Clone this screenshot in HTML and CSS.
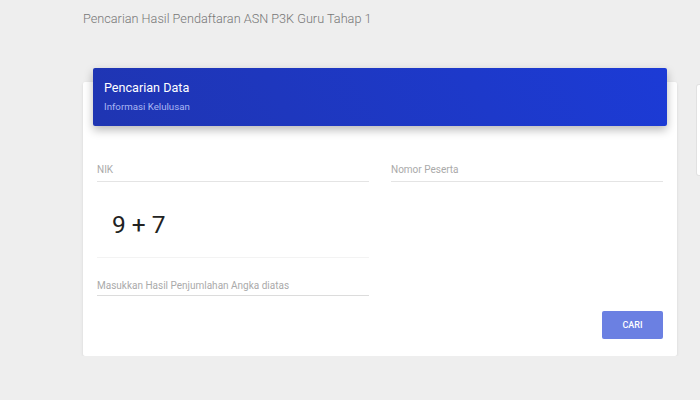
FILE: index.html
```html
<!DOCTYPE html>
<html lang="id">
<head>
    <meta charset="UTF-8">
    <meta name="viewport" content="width=device-width, initial-scale=1.0">
    <title>Pencarian Hasil Pendaftaran ASN P3K</title>
    <link rel="stylesheet" href="styles.css">
</head>
<body>
    <div class="page">
        <h1 class="page-title">Pencarian Hasil Pendaftaran ASN P3K Guru Tahap 1</h1>

        <div class="cards">
            <!-- search card -->
            <div class="card">
                <div class="card-header">
                    <h4 class="card-title">Pencarian Data</h4>
                    <p class="card-category">Informasi Kelulusan</p>
                </div>
                <div class="card-body">
                    <div class="col">
                        <div class="field">
                            <span class="field-label">NIK</span>
                        </div>
                        <div class="captcha">9 + 7</div>
                        <div class="field field-sum">
                            <span class="field-label">Masukkan Hasil Penjumlahan Angka diatas</span>
                        </div>
                    </div>
                    <div class="col">
                        <div class="field">
                            <span class="field-label">Nomor Peserta</span>
                        </div>
                    </div>
                </div>
                <div class="card-footer">
                    <button class="btn">CARI</button>
                </div>
            </div>
            <!-- side card -->
            <div class="card card-side"></div>
        </div>
    </div>
</body>
</html>
```

FILE: styles.css
```css
* {
    box-sizing: border-box;
}

body {
    font-family: Roboto, "Liberation Sans", sans-serif;
    margin: 0;
    padding: 0;
    background-color: #eeeeee;
    overflow: hidden;
}

.page {
    padding: 10px 0 0 83px;
}

.page-title {
    margin: 0;
    font-size: 12.7px;
    font-weight: 300;
    line-height: 18px;
    color: #777;
}

.cards {
    display: flex;
    align-items: flex-start;
    gap: 20px;
    margin-top: 54px;
}

.card {
    flex: 0 0 594px;
    background-color: #fff;
    border-radius: 2px;
    box-shadow: 0 1px 3px rgba(0, 0, 0, 0.1);
    padding: 0 10px;
}

.card-side {
    flex: 0 0 200px;
    height: 90px;
    margin-top: 3px;
    box-shadow: 0 0 0 1px rgba(0, 0, 0, 0.05);
}

.card-header {
    margin-top: -14px;
    padding: 11px 11px 12px;
    background: linear-gradient(60deg, #1f35b2, #1c3bd6);
    border-radius: 2px;
    box-shadow: 0 4px 10px rgba(0, 0, 0, 0.28);
    color: #fff;
}

.card-title {
    margin: 0;
    font-size: 12.6px;
    font-weight: 400;
    line-height: 18px;
}

.card-category {
    margin: 3px 0 0;
    font-size: 9.7px;
    font-weight: 400;
    line-height: 14px;
    color: #aab6f3;
}

.card-body {
    display: grid;
    grid-template-columns: 1fr 1fr;
    gap: 22px;
    padding: 25px 4px 0;
}

.field {
    padding: 12px 0 4px;
    border-bottom: 1px solid #e4e4e4;
}

.field-label {
    display: block;
    font-size: 10px;
    line-height: 14px;
    color: #aaa;
}

.captcha {
    padding: 29px 0 18px 15px;
    font-size: 24.5px;
    line-height: 28px;
    color: #222;
    border-bottom: 1px solid #f3f3f3;
}

.field-sum {
    padding: 21px 0 2px;
    border-bottom-color: #dcdcdc;
}

.card-footer {
    display: flex;
    justify-content: flex-end;
    padding: 15px 4px 17px;
}

.btn {
    width: 61px;
    height: 28px;
    border: 0;
    border-radius: 2px;
    background-color: #6b80e2;
    color: #fff;
    font-family: Roboto, "Liberation Sans", sans-serif;
    font-size: 9px;
    font-weight: 500;
    cursor: pointer;
}
```
